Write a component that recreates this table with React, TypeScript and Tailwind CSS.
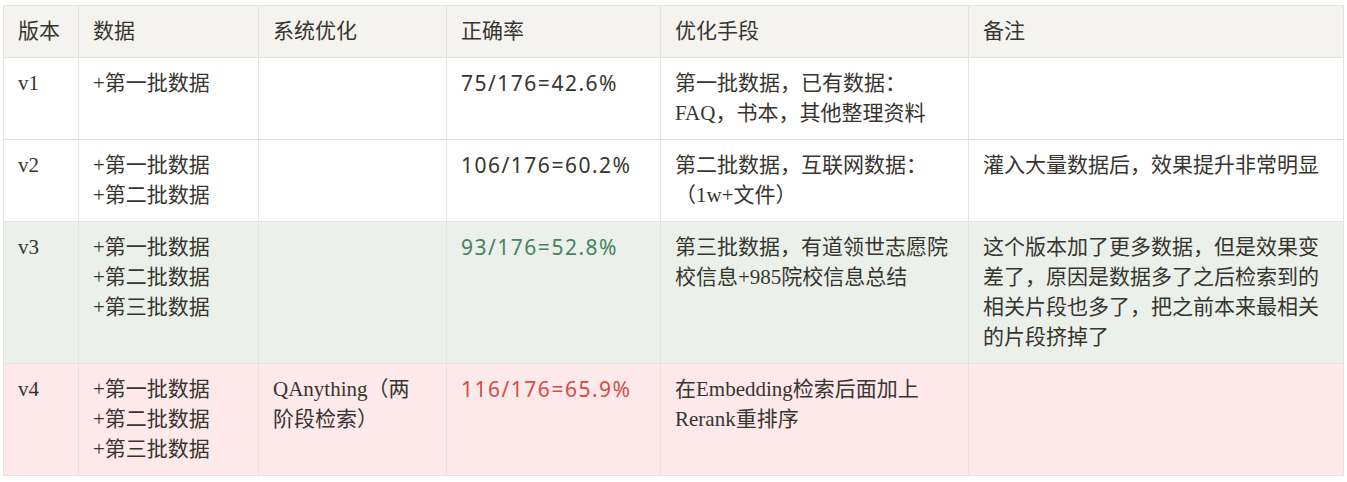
import React from "react";

type Tone = "none" | "green" | "red";

const rows: {
  tone: Tone;
  cells: string[][];
  rateTone: Tone;
}[] = [
  {
    tone: "none",
    rateTone: "none",
    cells: [["v1"], ["+第一批数据"], [], ["75/176=42.6%"], ["第一批数据，已有数据：", "FAQ，书本，其他整理资料"], []],
  },
  {
    tone: "none",
    rateTone: "none",
    cells: [
      ["v2"],
      ["+第一批数据", "+第二批数据"],
      [],
      ["106/176=60.2%"],
      ["第二批数据，互联网数据：", "（1w+文件）"],
      ["灌入大量数据后，效果提升非常明显"],
    ],
  },
  {
    tone: "green",
    rateTone: "green",
    cells: [
      ["v3"],
      ["+第一批数据", "+第二批数据", "+第三批数据"],
      [],
      ["93/176=52.8%"],
      ["第三批数据，有道领世志愿院", "校信息+985院校信息总结"],
      ["这个版本加了更多数据，但是效果变", "差了，原因是数据多了之后检索到的", "相关片段也多了，把之前本来最相关", "的片段挤掉了"],
    ],
  },
  {
    tone: "red",
    rateTone: "red",
    cells: [
      ["v4"],
      ["+第一批数据", "+第二批数据", "+第三批数据"],
      ["QAnything（两", "阶段检索）"],
      ["116/176=65.9%"],
      ["在Embedding检索后面加上", "Rerank重排序"],
      [],
    ],
  },
];

const headers = ["版本", "数据", "系统优化", "正确率", "优化手段", "备注"];

const rowBg: Record<Tone, string> = {
  none: "bg-white",
  green: "bg-[#ebf1ea]",
  red: "bg-[#fde8ea]",
};

const rateColor: Record<Tone, string> = {
  none: "text-[#37352f]",
  green: "text-[#448361]",
  red: "text-[#d44c47]",
};

const headCls =
  "border border-[#e4e3e0] pl-[14px] pr-[16px] pt-[8px] pb-[13px] align-top text-left font-normal";
const cellCls =
  "border border-[#e4e3e0] pl-[14px] pr-[16px] pt-[10px] pb-[11px] align-top text-left font-normal";

export default function App() {
  return (
    <div className="w-[1347px] h-[482px] bg-white pl-[3px] pt-[5px] font-['Liberation_Serif','Noto_Sans_CJK_SC',serif] text-[21px] leading-[30px] text-[#37352f]">
      <table className="table-fixed border-collapse w-[1340px]">
        <colgroup>
          <col className="w-[75px]" />
          <col className="w-[180px]" />
          <col className="w-[188px]" />
          <col className="w-[214px]" />
          <col className="w-[308px]" />
          <col className="w-[375px]" />
        </colgroup>
        <thead>
          <tr className="bg-[#f4f3f0]">
            {headers.map((h) => (
              <th key={h} className={headCls}>
                <div className="h-[30px] whitespace-nowrap font-['Noto_Sans_CJK_SC',serif]">{h}</div>
              </th>
            ))}
          </tr>
        </thead>
        <tbody>
          {rows.map((r, ri) => (
            <tr key={ri} className={rowBg[r.tone]}>
              {r.cells.map((lines, ci) => (
                <td key={ci} className={cellCls}>
                  {lines.map((l, li) => (
                    <div
                      key={li}
                      className={
                        ci === 3
                          ? `h-[30px] whitespace-nowrap font-['Noto_Sans','Noto_Sans_CJK_SC',sans-serif] tracking-[1.5px] ${rateColor[r.rateTone]}`
                          : "h-[30px] whitespace-nowrap"
                      }
                    >
                      {l}
                    </div>
                  ))}
                </td>
              ))}
            </tr>
          ))}
        </tbody>
      </table>
    </div>
  );
}
